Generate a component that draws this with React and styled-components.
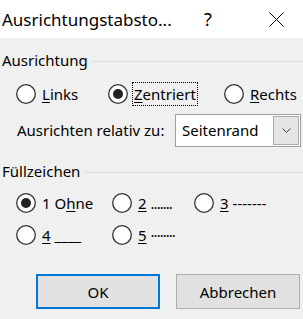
import React from "react";
import styled, { createGlobalStyle } from "styled-components";

const Global = createGlobalStyle`
  html, body { margin: 0; padding: 0; background: #f0f0f0; }
  body { font-family: "Segoe UI", "Noto Sans", "Liberation Sans", sans-serif; color: #000; }
`;

const Dialog = styled.div`
  width: 303px;
  height: 319px;
  background: #f0f0f0;
  display: flex;
  flex-direction: column;
  overflow: hidden;
`;

const TitleBar = styled.div`
  height: 38px;
  background: #fff;
  display: flex;
  align-items: center;
  flex-shrink: 0;
`;

const Title = styled.div`
  font-size: 17px;
  padding-left: 2px;
  width: 198px;
  white-space: nowrap;
`;

const Help = styled.div`
  font-size: 18px;
  width: 69px;
  padding-left: 4px;
  box-sizing: border-box;
`;

const Close = styled.svg`
  width: 15px;
  height: 15px;
  display: block;
`;

const Body = styled.div`
  display: flex;
  flex-direction: column;
  padding-top: 12px;
`;

const Legend = styled.div`
  display: flex;
  align-items: center;
  gap: 5px;
  font-size: 15px;
  height: 20px;
  padding-left: 2px;
  margin-top: ${(p) => p.$mt || 0}px;
  &::after {
    content: "";
    flex: 1;
    height: 1px;
    background: #dcdcdc;
    margin-top: 2px;
  }
`;

const Row = styled.div`
  display: flex;
  align-items: center;
  height: ${(p) => p.$h}px;
  padding-left: ${(p) => p.$pl || 16}px;
  margin-top: ${(p) => p.$mt || 0}px;
`;

const RadioItem = styled.label`
  display: flex;
  align-items: center;
  width: ${(p) => (p.$w ? `${p.$w}px` : "auto")};
  font-size: 15px;
  white-space: nowrap;
  flex-shrink: 0;
`;

const Circle = styled.svg`
  width: 20px;
  height: 20px;
  display: block;
  flex-shrink: 0;
  margin-right: 6px;
`;

const Caption = styled.span`
  padding: 2px 1px;
  border: 1px ${(p) => (p.$focus ? "dotted #000" : "solid transparent")};
  line-height: 18px;
  margin-left: -2px;
`;

const U = styled.span`
  text-decoration: underline;
  text-underline-offset: 2px;
`;

const Leader = styled.span`
  letter-spacing: ${(p) => p.$ls || 0}px;
  margin-left: 4px;
`;

const RelLabel = styled.span`
  font-size: 15px;
  width: 158px;
  flex-shrink: 0;
`;

const Select = styled.div`
  width: 126px;
  height: 33px;
  box-sizing: border-box;
  border: 1px solid #a0a0a0;
  background: #fff;
  display: flex;
  align-items: center;
  padding: 1px;
`;

const SelectText = styled.span`
  flex: 1;
  font-size: 15px;
  padding-left: 5px;
`;

const DropBtn = styled.div`
  width: 26px;
  height: 29px;
  box-sizing: border-box;
  background: #e5e5e5;
  border: 1px solid #acacac;
  display: flex;
  align-items: center;
  justify-content: center;
`;

const Buttons = styled.div`
  display: flex;
  gap: 16px;
  padding-left: 36px;
  margin-top: 23px;
`;

const Button = styled.div`
  width: 124px;
  height: 35px;
  box-sizing: border-box;
  background: #e1e1e1;
  border: ${(p) => (p.$default ? "2px solid #0078d7" : "1px solid #adadad")};
  display: flex;
  align-items: center;
  justify-content: center;
  font-size: 15px;
`;

function Radio({ checked }) {
  return (
    <Circle viewBox="0 0 20 20">
      <circle cx="10" cy="10" r="9.3" fill="#fff" stroke="#333" strokeWidth="1.3" />
      {checked && <circle cx="10" cy="10" r="5" fill="#222" />}
    </Circle>
  );
}

export default function App() {
  return (
    <Dialog>
      <Global />
      <TitleBar>
        <Title>Ausrichtungstabsto...</Title>
        <Help>?</Help>
        <Close viewBox="0 0 15 15">
          <path d="M0.5 0.5 L14.5 14.5 M14.5 0.5 L0.5 14.5" stroke="#000" strokeWidth="1" fill="none" />
        </Close>
      </TitleBar>
      <Body>
        <Legend>Ausrichtung</Legend>
        <Row $h={34} $mt={7}>
          <RadioItem $w={92}>
            <Radio />
            <Caption><U>L</U>inks</Caption>
          </RadioItem>
          <RadioItem $w={116}>
            <Radio checked />
            <Caption $focus><U>Z</U>entriert</Caption>
          </RadioItem>
          <RadioItem>
            <Radio />
            <Caption><U>R</U>echts</Caption>
          </RadioItem>
        </Row>
        <Row $h={34} $mt={2} $pl={17}>
          <RelLabel>Ausrichten relativ zu:</RelLabel>
          <Select>
            <SelectText>Seitenrand</SelectText>
            <DropBtn>
              <svg width="9" height="5" viewBox="0 0 9 5">
                <path d="M0.5 0.5 L4.5 4.5 L8.5 0.5" stroke="#444" strokeWidth="1" fill="none" />
              </svg>
            </DropBtn>
          </Select>
        </Row>
        <Legend $mt={14}>Füllzeichen</Legend>
        <Row $h={33} $mt={5}>
          <RadioItem $w={96}>
            <Radio checked />
            <Caption>1 O<U>h</U>ne</Caption>
          </RadioItem>
          <RadioItem $w={82}>
            <Radio />
            <Caption><U>2</U><Leader $ls={-1}>.......</Leader></Caption>
          </RadioItem>
          <RadioItem>
            <Radio />
            <Caption><U>3</U><Leader>-------</Leader></Caption>
          </RadioItem>
        </Row>
        <Row $h={32}>
          <RadioItem $w={96}>
            <Radio />
            <Caption><U>4</U><Leader>____</Leader></Caption>
          </RadioItem>
          <RadioItem>
            <Radio />
            <Caption><U>5</U><Leader $ls={-1}>········</Leader></Caption>
          </RadioItem>
        </Row>
        <Buttons>
          <Button $default>OK</Button>
          <Button>Abbrechen</Button>
        </Buttons>
      </Body>
    </Dialog>
  );
}
